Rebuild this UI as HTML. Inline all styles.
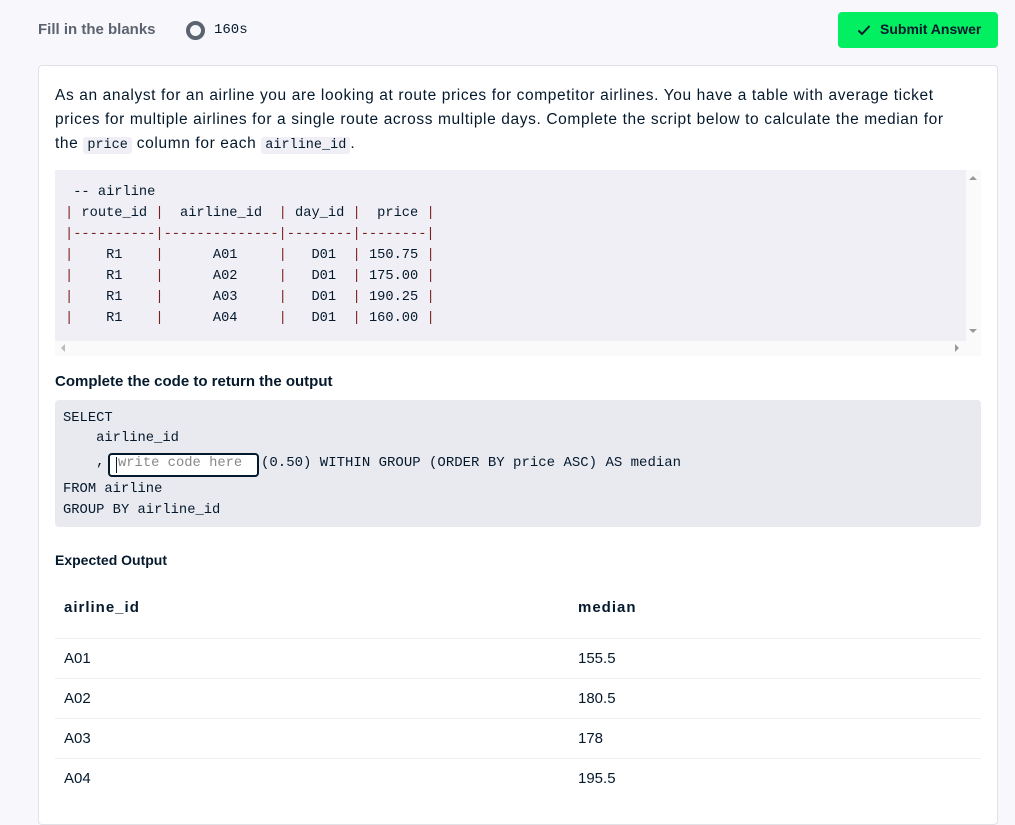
<!DOCTYPE html>
<html><head><meta charset="utf-8"><style>
*{margin:0;padding:0;box-sizing:border-box}
body{width:1015px;height:807px;overflow:hidden;background:#f7f7fc;font-family:"Liberation Sans",sans-serif;color:#05192d;position:relative}
.abs{position:absolute;white-space:pre}
.mono{font-family:"Liberation Mono",monospace}
.card{position:absolute;left:38px;top:65px;width:960px;height:760px;background:#fff;border:1px solid #e1e1e8;border-radius:4px}
code{font-family:"Liberation Mono",monospace;background:#efeff5;border-radius:3px;padding:1px 4px;font-size:13.5px;letter-spacing:0}
.p{color:#7a1f1f}
.line{position:absolute;left:55px;width:926px;height:1px;background:#eeeef4}
</style></head><body>
<div class="abs" style="left:38px;top:21px;font-size:15px;font-weight:bold;color:#5c6370">Fill in the blanks</div>
<div class="abs" style="left:186px;top:21px;width:19px;height:19px;border:4px solid #5c6370;border-radius:50%"></div>
<div class="abs mono" style="left:214px;top:22px;font-size:14px;color:#05192d">160s</div>
<div class="abs" style="left:838px;top:12px;width:160px;height:36px;background:#03ef62;border-radius:4px"></div>
<svg class="abs" style="left:857px;top:24px" width="14" height="12" viewBox="0 0 14 12"><path d="M1.5 6.5 L5 10 L12.5 2" stroke="#05192d" stroke-width="2" fill="none"/></svg>
<div class="abs" style="left:880px;top:21px;font-size:14px;font-weight:bold;color:#05192d">Submit Answer</div>
<div class="card"></div>
<div class="abs" style="left:55px;top:84px;font-size:15.5px;letter-spacing:0.62px;line-height:24px;color:#05192d">As an analyst for an airline you are looking at route prices for competitor airlines. You have a table with average ticket
prices for multiple airlines for a single route across multiple days. Complete the script below to calculate the median for
the <code>price</code> column for each <code>airline_id</code>.</div>
<div class="abs" style="left:55px;top:170px;width:911px;height:171px;background:#efeff5"></div>
<div class="abs" style="left:966px;top:170px;width:15px;height:186px;background:#fafafa"></div>
<div class="abs" style="left:55px;top:341px;width:911px;height:15px;background:#fafafa"></div>
<div class="abs" style="left:969px;top:176px;width:0;height:0;border-left:4px solid transparent;border-right:4px solid transparent;border-bottom:4px solid #999"></div>
<div class="abs" style="left:969px;top:329px;width:0;height:0;border-left:4px solid transparent;border-right:4px solid transparent;border-top:4px solid #999"></div>
<div class="abs" style="left:61px;top:344px;width:0;height:0;border-top:4px solid transparent;border-bottom:4px solid transparent;border-right:4px solid #bbb"></div>
<div class="abs" style="left:955px;top:344px;width:0;height:0;border-top:4px solid transparent;border-bottom:4px solid transparent;border-left:4px solid #999"></div>
<div class="abs mono" style="left:65px;top:182px;font-size:13.7px;line-height:21px;color:#05192d"> -- airline
<span class="p">|</span> route_id <span class="p">|</span>  airline_id  <span class="p">|</span> day_id <span class="p">|</span>  price <span class="p">|</span>
<span class="p">|----------|--------------|--------|--------|</span>
<span class="p">|</span>    R1    <span class="p">|</span>      A01     <span class="p">|</span>   D01  <span class="p">|</span> 150.75 <span class="p">|</span>
<span class="p">|</span>    R1    <span class="p">|</span>      A02     <span class="p">|</span>   D01  <span class="p">|</span> 175.00 <span class="p">|</span>
<span class="p">|</span>    R1    <span class="p">|</span>      A03     <span class="p">|</span>   D01  <span class="p">|</span> 190.25 <span class="p">|</span>
<span class="p">|</span>    R1    <span class="p">|</span>      A04     <span class="p">|</span>   D01  <span class="p">|</span> 160.00 <span class="p">|</span></div>
<div class="abs" style="left:55px;top:373px;font-size:15px;font-weight:bold">Complete the code to return the output</div>
<div class="abs" style="left:55px;top:400px;width:926px;height:127px;background:#e9eaf0;border-radius:4px"></div>
<div class="abs mono" style="left:63px;top:409px;font-size:13.8px;line-height:20px">SELECT
    airline_id</div>
<div class="abs mono" style="left:63px;top:455px;font-size:13.8px">    ,</div>
<div class="abs mono" style="left:261px;top:455px;font-size:14px">(0.50) WITHIN GROUP (ORDER BY price ASC) AS median</div>
<div class="abs" style="left:108px;top:453px;width:151px;height:24px;border:2px solid #05192d;border-radius:4px;background:#fff"></div>
<div class="abs" style="left:116px;top:457px;width:1px;height:16px;background:#05192d"></div>
<div class="abs mono" style="left:118px;top:456px;font-size:13.8px;color:#888">write code here</div>
<div class="abs mono" style="left:63px;top:479px;font-size:13.8px;line-height:21px">FROM airline
GROUP BY airline_id</div>
<div class="abs" style="left:55px;top:552px;font-size:14px;font-weight:bold">Expected Output</div>
<div class="abs" style="left:64px;top:599px;font-size:15px;font-weight:bold;letter-spacing:1px">airline_id</div>
<div class="abs" style="left:578px;top:599px;font-size:15px;font-weight:bold;letter-spacing:1px">median</div>
<div class="line" style="top:638px"></div>
<div class="abs" style="left:64px;top:650px;font-size:15px">A01</div><div class="abs" style="left:578px;top:650px;font-size:15px">155.5</div>
<div class="line" style="top:678px"></div>
<div class="abs" style="left:64px;top:690px;font-size:15px">A02</div><div class="abs" style="left:578px;top:690px;font-size:15px">180.5</div>
<div class="line" style="top:718px"></div>
<div class="abs" style="left:64px;top:730px;font-size:15px">A03</div><div class="abs" style="left:578px;top:730px;font-size:15px">178</div>
<div class="line" style="top:758px"></div>
<div class="abs" style="left:64px;top:770px;font-size:15px">A04</div><div class="abs" style="left:578px;top:770px;font-size:15px">195.5</div>
</body></html>
